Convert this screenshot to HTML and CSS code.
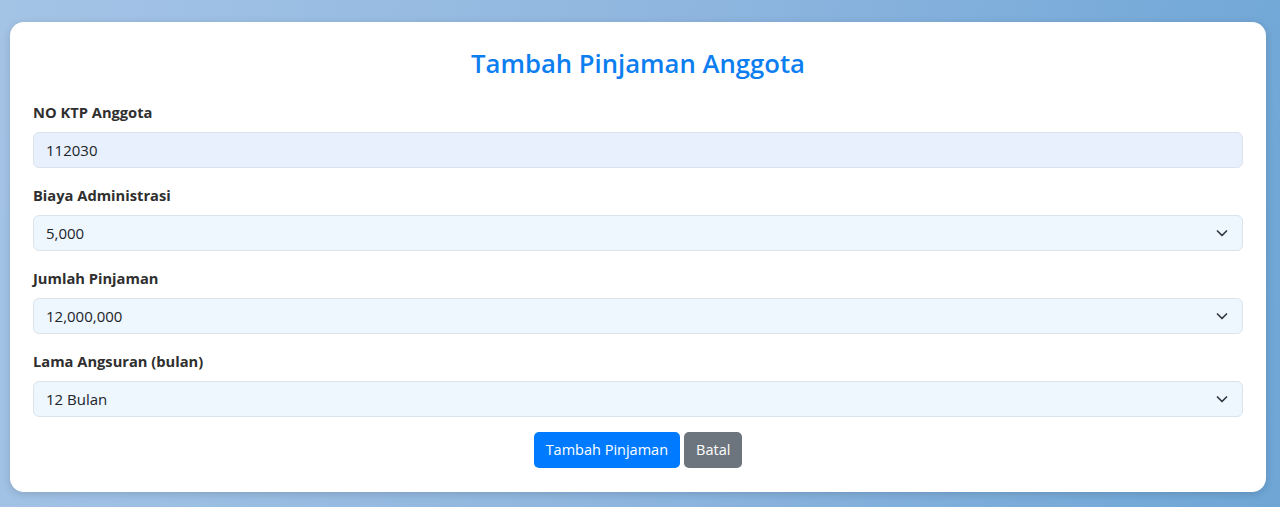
FILE: index.html
```html
<!DOCTYPE html>
<html lang="id">
<head>
<meta charset="utf-8">
<title>Tambah Pinjaman Anggota</title>
<link rel="stylesheet" href="styles.css">
</head>
<body>
<div class="page">
  <div class="card">
    <h2 class="title">Tambah Pinjaman Anggota</h2>
    <form class="form">
      <div class="group">
        <label class="label">NO KTP Anggota</label>
        <div class="control autofill">112030</div>
      </div>
      <div class="group">
        <label class="label">Biaya Administrasi</label>
        <div class="control select"><span>5,000</span>
          <svg class="chev" width="12" height="8" viewBox="0 0 12 8"><path d="M1.5 2l4.5 4.5 4.5-4.5" fill="none" stroke="#343a40" stroke-width="1.7" stroke-linecap="round" stroke-linejoin="round"/></svg>
        </div>
      </div>
      <div class="group">
        <label class="label">Jumlah Pinjaman</label>
        <div class="control select"><span>12,000,000</span>
          <svg class="chev" width="12" height="8" viewBox="0 0 12 8"><path d="M1.5 2l4.5 4.5 4.5-4.5" fill="none" stroke="#343a40" stroke-width="1.7" stroke-linecap="round" stroke-linejoin="round"/></svg>
        </div>
      </div>
      <div class="group">
        <label class="label">Lama Angsuran (bulan)</label>
        <div class="control select"><span>12 Bulan</span>
          <svg class="chev" width="12" height="8" viewBox="0 0 12 8"><path d="M1.5 2l4.5 4.5 4.5-4.5" fill="none" stroke="#343a40" stroke-width="1.7" stroke-linecap="round" stroke-linejoin="round"/></svg>
        </div>
      </div>
      <div class="actions">
        <button type="button" class="btn btn-primary">Tambah Pinjaman</button>
        <button type="button" class="btn btn-secondary">Batal</button>
      </div>
    </form>
  </div>
</div>
</body>
</html>
```
FILE: styles.css
```css
html, body {
  margin: 0;
  height: 100%;
}
body {
  font-family: "Open Sans", "Noto Sans", sans-serif;
  font-size: 16px;
  color: #212529;
  background: linear-gradient(100deg, #a4c4e6 0%, #8fb6df 50%, #6ea6d6 100%);
}
.page {
  padding: 22px 14px 15px 10px;
}
.card {
  background: #fff;
  border-radius: 14px;
  box-shadow: 0 2px 8px rgba(0, 0, 0, 0.15);
  padding: 25px 23px 24px;
}
.title {
  margin: 0 0 19px;
  text-align: center;
  color: #0d7ef0;
  font-size: 25.7px;
  font-weight: 600;
  line-height: 34px;
}
.group {
  display: flex;
  flex-direction: column;
  margin-bottom: 15px;
}
.label {
  font-weight: 700;
  color: #2f2f2f;
  font-size: 14.7px;
  line-height: 24px;
  margin-bottom: 8px;
}
.control {
  height: 36px;
  box-sizing: border-box;
  border: 1px solid #dbe3ec;
  border-radius: 6px;
  padding: 0 12px;
  display: flex;
  align-items: center;
  justify-content: space-between;
  font-size: 15px;
  color: #212529;
}
.autofill {
  background: #e8f0fe;
}
.select {
  background: #eef6fe;
}
.chev {
  margin-right: 2px;
}
.actions {
  display: flex;
  justify-content: center;
  gap: 4px;
}
.btn {
  font-family: inherit;
  font-size: 14.5px;
  color: #fff;
  border: none;
  border-radius: 5px;
  height: 36px;
  padding: 0 12px;
  line-height: 36px;
}
.btn-primary {
  background: #007bff;
}
.btn-secondary {
  background: #6c757d;
}
```
